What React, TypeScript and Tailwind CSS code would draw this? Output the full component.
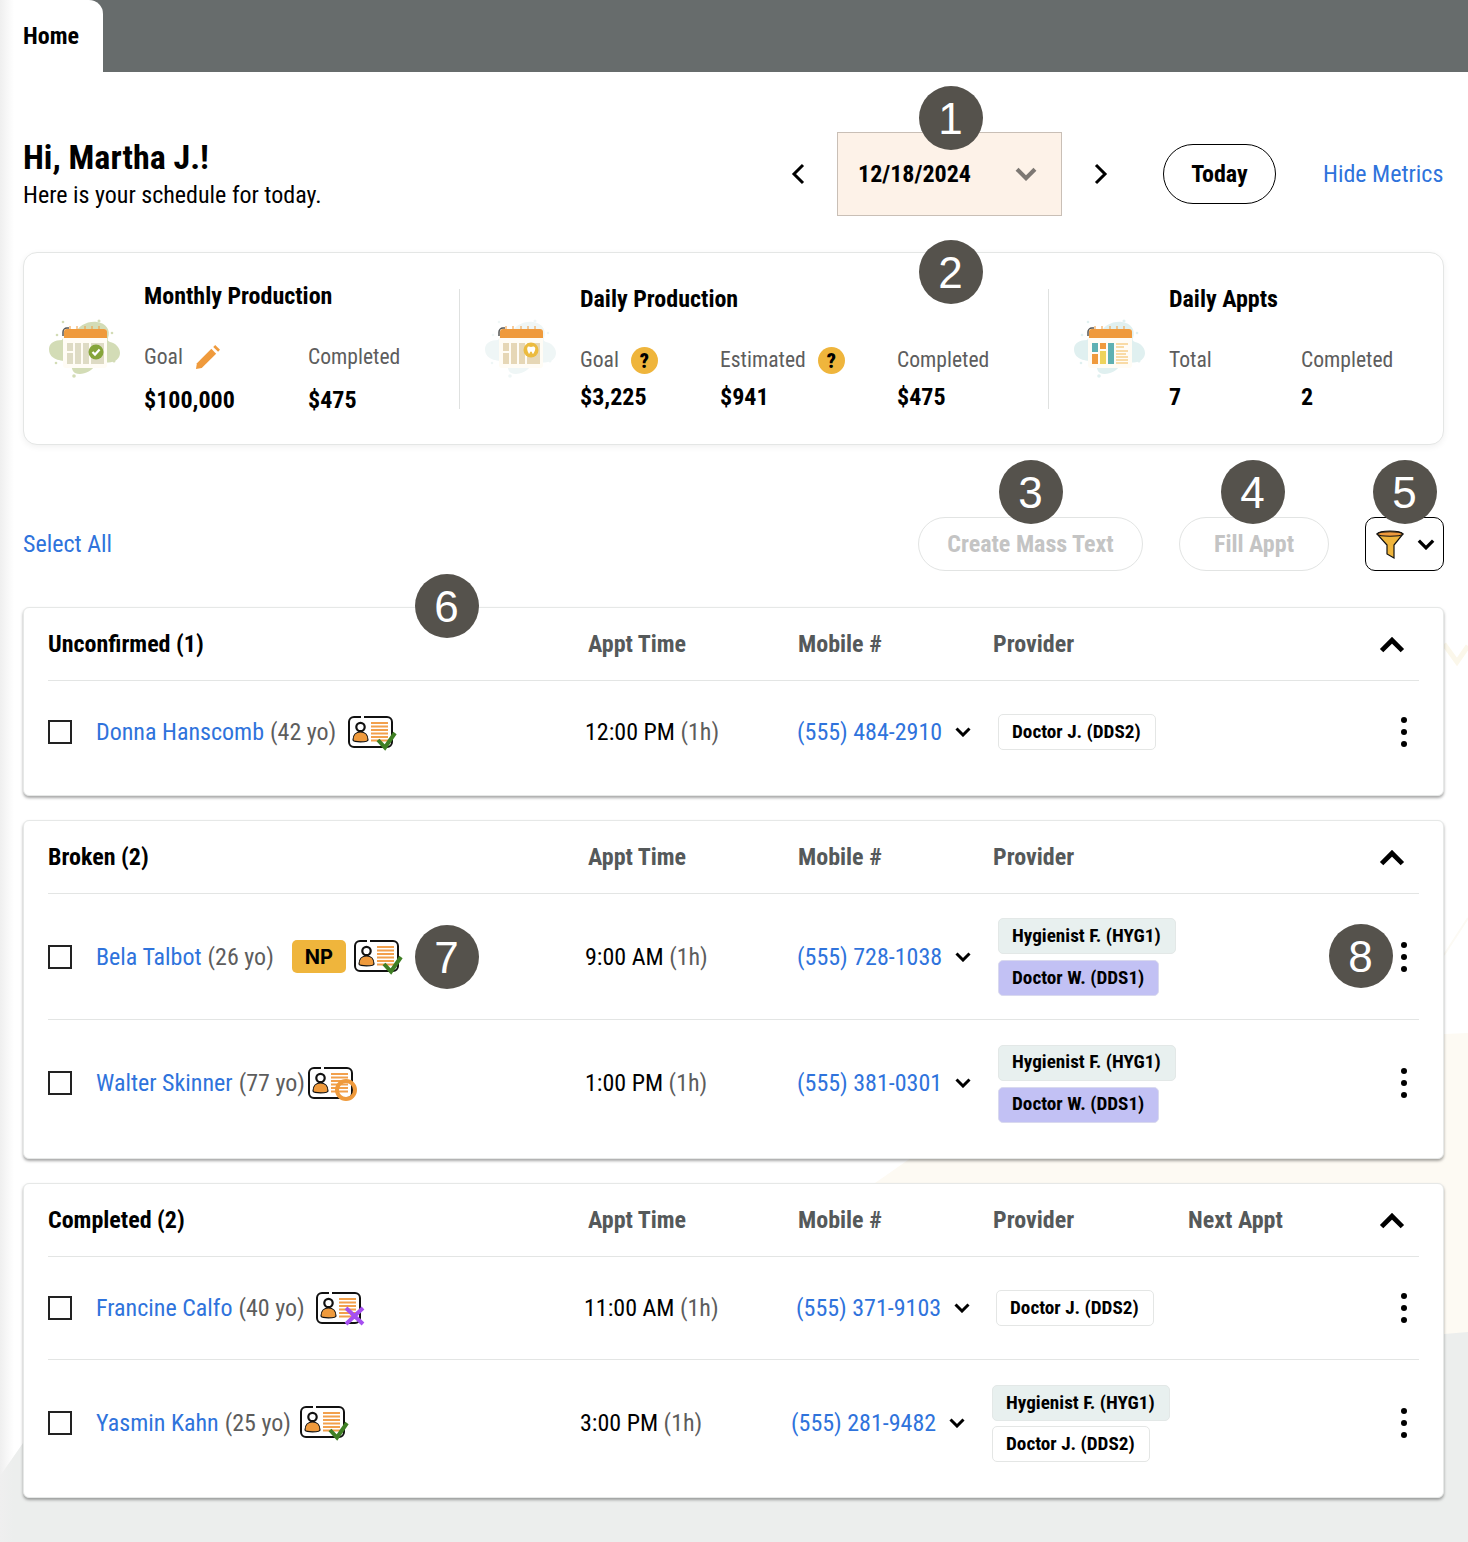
import React from "react";

const F = "font-['Roboto','Liberation_Sans',sans-serif] [font-stretch:75%]";

function Badge({ n, className }: { n: number; className: string }) {
  return (
    <div className={`absolute w-[64px] h-[64px] pt-[2px] pr-[1px] rounded-full bg-[#55524c] text-white flex items-center justify-center text-[44px] font-['Liberation_Sans',sans-serif] [font-stretch:100%] ${className}`}>
      {n}
    </div>
  );
}

function Cal({ kind }: { kind: "check" | "tooth" | "chart" }) {
  const blob = kind === "check" ? "#d3dcb6" : kind === "tooth" ? "#eff6f6" : "#e0f0f0";
  return (
    <svg width="72" height="60" viewBox="0 0 72 60" className="block">
      <path d="M1 30c0-6 6-9 13-9 2-5 9-6 13-6 3-8 12-13 22-12 9 1 14 8 11 16-1 2 0 3 2 4 5 1 10 5 10 11 0 7-8 11-15 9-4-1-8 0-10 3-3 7-14 11-20 8-4-2-2-8-7-11-3-2-19 0-19-13z" fill={blob} />
      <g fill={blob}>
        <circle cx="9" cy="16" r="1.300" />
        <circle cx="15" cy="3" r="1.300" />
        <circle cx="51" cy="2" r="1.500" />
        <circle cx="64" cy="14" r="1.300" />
        <circle cx="66" cy="42" r="1.500" />
        <circle cx="26" cy="57" r="1.800" />
        <circle cx="8" cy="44" r="1.300" />
      </g>
      <rect x="15" y="10" width="44" height="39" rx="3" fill="#fffcf5" />
      <path d="M15 17v-4a4 4 0 0 1 4-4h2" fill="none" stroke="#555" strokeWidth="1.500" />
      <path d="M16 19v-6a3 3 0 0 1 3-3h37a3 3 0 0 1 3 3v6z" fill="#ef9a3c" />
      <path d="M22 7v4M29 7v4M37 7v4M44 7v4M51 7v4" stroke="#ef9a3c" strokeWidth="1" />
      {kind === "chart" ? (
        <g>
          <rect x="19" y="24" width="6" height="9" fill="#5fb0b2" />
          <rect x="19" y="35" width="6" height="10" fill="#ef9a3c" />
          <rect x="27" y="24" width="6" height="6" fill="#ef9a3c" />
          <rect x="27" y="32" width="6" height="13" fill="#eed35c" />
          <rect x="35" y="24" width="6" height="21" fill="#5fb0b2" />
          <path d="M43 25h12M43 28h8M43 32h12M43 35h10M43 38h12M43 41h12M43 44h12" stroke="#f8cf8c" strokeWidth="1.500" />
        </g>
      ) : (
        <g fill={kind === "check" ? "#dedbc4" : "#e6d7b6"}>
          <rect x="19" y="24" width="6" height="8" />
          <rect x="19" y="34" width="6" height="11" />
          <rect x="27" y="24" width="6" height="21" />
          <rect x="35" y="24" width="6" height="21" />
          <rect x="43" y="24" width="13" height="21" />
        </g>
      )}
      {kind === "check" && (
        <g>
          <circle cx="48" cy="33" r="7.500" fill="#86a53a" />
          <path d="M44.500 33l2.500 2.600 4.600-5" fill="none" stroke="#fff" strokeWidth="2.200" />
        </g>
      )}
      {kind === "tooth" && (
        <g>
          <circle cx="47" cy="31" r="7.500" fill="#ecbb3e" />
          <path d="M43.500 28c1.500-1 2.500 0 3.500 0s2-1 3.500 0 .5 4-.5 5.500c-.5 1-1 2-1.500 1s-.5-2-1.500-2-1 1-1.500 2-1-.5-1.500-1.500-1.500-4.500 0-5z" fill="#fff" />
        </g>
      )}
    </svg>
  );
}

function Card({ mark, className = "" }: { mark: "check" | "circle" | "x"; className?: string }) {
  return (
    <svg width="48" height="36" viewBox="0 0 48 36" className={`overflow-visible mt-[3px] shrink-0 ${className}`}>
      <path d="M13 1H6a5 5 0 0 0-5 5v20a5 5 0 0 0 5 5h33a5 5 0 0 0 5-5V6a5 5 0 0 0-5-5H16" fill="none" stroke="#111" strokeWidth="2" />
      <circle cx="12.500" cy="11" r="4.200" fill="#fff" stroke="#111" strokeWidth="2.200" />
      <path d="M5 24c0-5 3-8 7.500-8s7.500 3 7.500 8c0 2.500-15 2.500-15 0z" fill="#ef9a3c" stroke="#111" strokeWidth="1.200" />
      <path d="M23 7h17M23 10.500h17M23 14h17M23 17.500h17M23 21h17M23 24.500h17" stroke="#f2a04c" strokeWidth="1.800" />
      {mark === "check" && <path d="M30 24l7 7.500 10-14.500" fill="none" stroke="#3f7f24" strokeWidth="4" />}
      {mark === "circle" && <circle cx="38" cy="23" r="9" fill="none" stroke="#ef9a3c" strokeWidth="4" />}
      {mark === "x" && <path d="M30 16l17 16M47 16L30 32" stroke="#a64ff0" strokeWidth="4" />}
    </svg>
  );
}

function Chevron({ up = false, className = "" }: { up?: boolean; className?: string }) {
  return (
    <svg width="16" height="10" viewBox="0 0 16 10" className={className}>
      <path d={up ? "M1.500 8.500L8 2l6.500 6.500" : "M1.500 1.500L8 8l6.500-6.500"} fill="none" stroke="#000" strokeWidth="3" />
    </svg>
  );
}

function Dots() {
  return (
    <div className="flex flex-col gap-[6px] items-center">
      <span className="w-[6px] h-[6px] rounded-full bg-black" />
      <span className="w-[6px] h-[6px] rounded-full bg-black" />
      <span className="w-[6px] h-[6px] rounded-full bg-black" />
    </div>
  );
}

function Chip({ label, tone }: { label: string; tone: "hyg" | "w" | "j" }) {
  const c = tone === "hyg" ? "bg-[#e8f0ef] border-[#e3e8e7]" : tone === "w" ? "bg-[#c2c1f4] border-[#d9d9ef]" : "bg-white border-[#e4e6e5]";
  return <div className={`h-[36px] pl-[13px] pr-[14px] flex items-center rounded-[5px] border text-[19.2px] font-bold text-black whitespace-nowrap w-fit ${c}`}>{label}</div>;
}

function Q() {
  return <span className="w-[27px] h-[27px] rounded-full bg-[#efb53c] flex items-center justify-center text-[20px] font-black text-black">?</span>;
}

function Stat({ label, value, width, extra, valueMt = "mt-[8px]" }: { label: string; value: string; width: string; extra?: React.ReactNode; valueMt?: string }) {
  return (
    <div className={width}>
      <div className="flex items-center gap-[12px] h-[28px] text-[#5d5d5d] text-[21.6px]">
        <span>{label}</span>
        {extra}
      </div>
      <div className={`${valueMt} text-[24px] font-bold leading-[28px] text-black`}>{value}</div>
    </div>
  );
}

function Metric({ kind, title, children, className }: { kind: "check" | "tooth" | "chart"; title: string; children: React.ReactNode; className: string }) {
  return (
    <div className={`flex items-center ${className}`}>
      <div className="ml-[24px] mr-[24px]"><Cal kind={kind} /></div>
      <div className="pb-[2px]">
        <div className="text-[24px] font-bold leading-[28px] text-black">{title}</div>
        <div className="flex mt-[34px]">{children}</div>
      </div>
    </div>
  );
}

type Row = {
  name: string;
  age: string;
  np?: boolean;
  mark: "check" | "circle" | "x";
  time: string;
  phone: string;
  chips: { label: string; tone: "hyg" | "w" | "j" }[];
  h: string;
  shift?: string;
  gap?: string;
  timeW?: string;
  phoneW?: string;
  chipCls?: string;
};

function Section({ title, rows, next, height }: { title: string; rows: Row[]; next?: boolean; height: string }) {
  return (
    <div className={`bg-white rounded-[6px] border border-[#e6e8e7] shadow-[0_2px_3px_rgba(0,0,0,0.35)] px-[24px] ${height}`}>
      <div className="h-[73px] flex items-center border-b border-[#e3e5e4] text-[24px] font-bold text-[#55595a]">
        <div className="w-[540px] text-black">{title}</div>
        <div className="w-[210px]">Appt Time</div>
        <div className="w-[195px]">Mobile #</div>
        <div className="w-[195px]">Provider</div>
        <div className="flex-1">{next ? "Next Appt" : ""}</div>
        <Chevron up className="mr-[14px] mt-[2px] w-[26px] h-[16px]" />
      </div>
      {rows.map((r, i) => (
        <div key={r.name} className={`flex items-center ${r.h} ${i < rows.length - 1 ? "border-b border-[#e3e5e4]" : ""}`}>
          <div className="w-[24px] h-[24px] border-2 border-[#222] shrink-0" />
          <div className="w-[513px] pl-[24px] flex items-center text-[24px]">
            <span className="text-[#2f73dc]">{r.name}</span>
            <span className="text-[#5d5d5d] ml-[6px]">{r.age}</span>
            {r.np && <span className="ml-[18px] w-[54px] h-[33px] rounded-[5px] bg-[#efb53c] text-black text-[20px] font-bold flex items-center justify-center font-['Inter',sans-serif] [font-stretch:100%]">NP</span>}
            <Card mark={r.mark} className={r.gap ?? "ml-[12px]"} />
          </div>
          <div className={`${r.shift ?? ""} flex items-center`}>
            <div className={`${r.timeW ?? "w-[212px]"} text-[24px] text-black`}>
              {r.time} <span className="text-[#5d5d5d]">(1h)</span>
            </div>
            <div className={`${r.phoneW ?? "w-[201px]"} flex items-center text-[24px] text-[#2f73dc]`}>
              <span>{r.phone}</span>
              <Chevron className="ml-[13px]" />
            </div>
            <div className={`flex flex-col ${r.chipCls ?? "gap-[5px]"}`}>
              {r.chips.map((c) => <Chip key={c.label} {...c} />)}
            </div>
          </div>
          <div className="ml-auto mr-[12px]"><Dots /></div>
        </div>
      ))}
    </div>
  );
}

const hyg = { label: "Hygienist F. (HYG1)", tone: "hyg" as const };
const docW = { label: "Doctor W. (DDS1)", tone: "w" as const };
const docJ = { label: "Doctor J. (DDS2)", tone: "j" as const };

export default function App() {
  return (
    <div className={`relative w-[1468px] h-[1542px] overflow-hidden bg-white ${F}`}>
      <svg className="absolute inset-0" width="1468" height="1542" viewBox="0 0 1468 1542">
        <path d="M875 1183L908 1160L1000 1100L1444 1034L1468 1033V1340H875z" fill="#fdfaf3" />
        <path d="M0 1476L60 1390L1444 1334L1468 1332V1542H0z" fill="#eceeed" />
        <path d="M1444 644l13 18 11-16" fill="none" stroke="#fbf7ea" strokeWidth="5" />
        <path d="M1444 955l24-37" fill="none" stroke="#fcfaf4" strokeWidth="2" />
      </svg>

      <div className="relative">
        <div className="h-[72px] bg-[#676c6c]">
          <div className="w-[103px] h-[72px] bg-white rounded-tr-[14px] pl-[23px] pt-[20px] text-[24px] leading-[32px] font-bold text-black">Home</div>
        </div>

        <div className="pl-[23px] pr-[24px]">
          <div className="h-[180px] flex items-center pt-[23px]">
            <div className="w-[741px] shrink-0 pb-[2px]">
              <div className="text-[34px] leading-[40px] font-bold text-black">Hi, Martha J.!</div>
              <div className="mt-[4px] text-[24px] leading-[28px] text-black">Here is your schedule for today.</div>
            </div>
            <svg width="16" height="24" viewBox="0 0 16 24" className="ml-[26px] shrink-0"><path d="M13 3L4 12l9 9" fill="none" stroke="#000" strokeWidth="3" /></svg>
            <div className="ml-[31px] w-[225px] h-[84px] shrink-0 bg-[#fdf2e8] border border-[#c9bfb6] flex items-center justify-between pl-[20px] pr-[24px] text-[24px] font-bold text-black">
              <span>12/18/2024</span>
              <Chevron className="w-[22px] h-[14px] opacity-50" />
            </div>
            <svg width="16" height="24" viewBox="0 0 16 24" className="ml-[31px] shrink-0"><path d="M3 3l9 9-9 9" fill="none" stroke="#000" strokeWidth="3" /></svg>
            <div className="ml-[54px] w-[113px] h-[60px] shrink-0 rounded-full border border-black flex items-center justify-center text-[24px] font-bold text-black">Today</div>
            <div className="ml-[47px] text-[24px] text-[#2f73dc] whitespace-nowrap">Hide Metrics</div>
          </div>

          <div className="h-[193px] bg-white rounded-[14px] border border-[#e4e6e5] shadow-[0_2px_6px_rgba(0,0,0,0.06)] flex items-center">
            <Metric kind="check" title="Monthly Production" className="w-[436px] border-r border-[#dfe1e0] h-[120px]">
              <Stat label="Goal" value="$100,000" width="w-[164px]" valueMt="mt-[14px]" extra={<svg width="25" height="25" viewBox="0 0 26 26"><path d="M1 25l1-6L17 4l5 5L7 24z" fill="#ef9a3c" /><path d="M19 2l2-2 5 5-2 2z" fill="#ef9a3c" /></svg>} />
              <Stat label="Completed" value="$475" width="w-[120px]" valueMt="mt-[14px]" />
            </Metric>
            <Metric kind="tooth" title="Daily Production" className="w-[589px] border-r border-[#dfe1e0] h-[120px]">
              <Stat label="Goal" value="$3,225" width="w-[140px]" extra={<Q />} />
              <Stat label="Estimated" value="$941" width="w-[177px]" extra={<Q />} />
              <Stat label="Completed" value="$475" width="w-[120px]" />
            </Metric>
            <Metric kind="chart" title="Daily Appts" className="flex-1 h-[120px]">
              <Stat label="Total" value="7" width="w-[132px]" />
              <Stat label="Completed" value="2" width="w-[120px]" />
            </Metric>
          </div>

          <div className="h-[162px] flex items-center pt-[36px]">
            <div className="text-[24px] text-[#2f73dc]">Select All</div>
            <div className="ml-auto w-[225px] h-[54px] rounded-full border border-[#e2e4e3] flex items-center justify-center text-[24px] font-bold text-[#c4c4c4]">Create Mass Text</div>
            <div className="ml-[36px] w-[150px] h-[54px] rounded-full border border-[#e2e4e3] flex items-center justify-center text-[24px] font-bold text-[#c4c4c4]">Fill Appt</div>
            <div className="ml-[36px] w-[79px] h-[54px] rounded-[10px] border border-black bg-white flex items-center pl-[10px] gap-[13px]">
              <svg width="28" height="29" viewBox="0 0 28 29" className="overflow-visible"><path d="M1 4c3-4 23-4 26 0L18 15v13l-7-4v-9z" fill="#efb53c" stroke="#111" strokeWidth="1.200" /><path d="M1 4c3-3 23-3 26 0-2 3-24 3-26 0z" fill="#ef9a3c" stroke="#111" strokeWidth="1.200" /></svg>
              <Chevron className="w-[18px] h-[11px]" />
            </div>
          </div>

          <div className="flex flex-col gap-[24px]">
            <Section title="Unconfirmed (1)" height="h-[189px]" rows={[
              { name: "Donna Hanscomb", age: "(42 yo)", mark: "check", time: "12:00 PM", phone: "(555) 484-2910", chips: [docJ], h: "h-[102px]" },
            ]} />
            <Section title="Broken (2)" height="h-[339px]" rows={[
              { name: "Bela Talbot", age: "(26 yo)", np: true, mark: "check", gap: "ml-[8px]", time: "9:00 AM", phone: "(555) 728-1038", chips: [hyg, docW], h: "h-[126px]", chipCls: "gap-[6px] mt-[1px]" },
              { name: "Walter Skinner", age: "(77 yo)", mark: "circle", gap: "ml-[3px]", time: "1:00 PM", phone: "(555) 381-0301", chips: [hyg, docW], h: "h-[126px]", chipCls: "gap-[6px] mt-[1px]" },
            ]} />
            <Section title="Completed (2)" next height="h-[315px]" rows={[
              { name: "Francine Calfo", age: "(40 yo)", mark: "x", gap: "ml-[11px]", time: "11:00 AM", phone: "(555) 371-9103", chips: [docJ], h: "h-[103px]", shift: "-ml-[1px]", phoneW: "w-[200px]" },
              { name: "Yasmin Kahn", age: "(25 yo)", mark: "check", gap: "ml-[9px]", time: "3:00 PM", phone: "(555) 281-9482", chips: [hyg, docJ], h: "h-[125px]", shift: "-ml-[5px]", timeW: "w-[211px]", chipCls: "gap-[5px] mt-[2px]" },
            ]} />
          </div>
        </div>
      </div>

      <div className="absolute left-0 top-0 bottom-0 w-[14px] bg-gradient-to-r from-[#efefef] to-transparent" />

      <Badge n={1} className="left-[919px] top-[86px]" />
      <Badge n={2} className="left-[919px] top-[240px]" />
      <Badge n={3} className="left-[999px] top-[460px]" />
      <Badge n={4} className="left-[1221px] top-[460px]" />
      <Badge n={5} className="left-[1373px] top-[460px]" />
      <Badge n={6} className="left-[415px] top-[574px]" />
      <Badge n={7} className="left-[415px] top-[925px]" />
      <Badge n={8} className="left-[1329px] top-[924px]" />
    </div>
  );
}
